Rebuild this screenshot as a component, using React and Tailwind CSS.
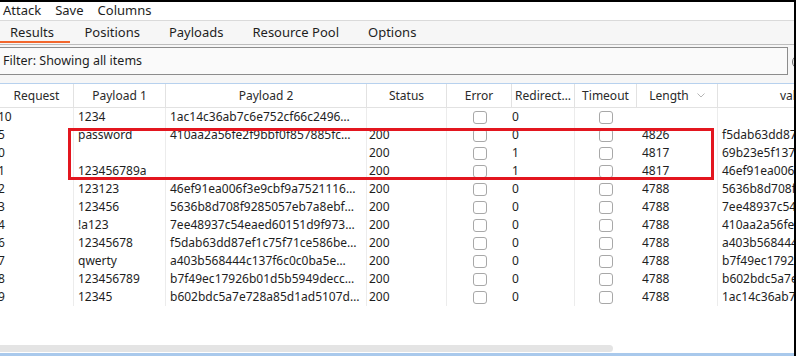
import React from "react";

const rows = [
  { req: "10", p1: "1234", p2: "1ac14c36ab7c6e752cf66c2496…", st: "", rd: "0", len: "", val: "" },
  { req: "5", p1: "password", p2: "410aa2a56fe2f9bbf0f857885fc…", st: "200", rd: "0", len: "4826", val: "f5dab63dd87ef1c75f71ce586be" },
  { req: "0", p1: "", p2: "", st: "200", rd: "1", len: "4817", val: "69b23e5f137a44a8c0d1b22e09" },
  { req: "1", p1: "123456789a", p2: "", st: "200", rd: "1", len: "4817", val: "46ef91ea006f3e9cbf9a7521116" },
  { req: "2", p1: "123123", p2: "46ef91ea006f3e9cbf9a7521116…", st: "200", rd: "0", len: "4788", val: "5636b8d708f9285057eb7a8ebf" },
  { req: "3", p1: "123456", p2: "5636b8d708f9285057eb7a8ebf…", st: "200", rd: "0", len: "4788", val: "7ee48937c54eaed60151d9f973" },
  { req: "4", p1: "!a123", p2: "7ee48937c54eaed60151d9f973…", st: "200", rd: "0", len: "4788", val: "410aa2a56fe2f9bbf0f857885fc" },
  { req: "6", p1: "12345678", p2: "f5dab63dd87ef1c75f71ce586be…", st: "200", rd: "0", len: "4788", val: "a403b568444c137f6c0c0ba5e" },
  { req: "7", p1: "qwerty", p2: "a403b568444c137f6c0c0ba5e…", st: "200", rd: "0", len: "4788", val: "b7f49ec17926b01d5b5949decc" },
  { req: "8", p1: "123456789", p2: "b7f49ec17926b01d5b5949decc…", st: "200", rd: "0", len: "4788", val: "b602bdc5a7e728a85d1ad5107d" },
  { req: "9", p1: "12345", p2: "b602bdc5a7e728a85d1ad5107d…", st: "200", rd: "0", len: "4788", val: "1ac14c36ab7c6e752cf66c2496" },
];

function Box() {
  return <div className="w-[14px] h-[13px] rounded-[3px] border border-[#a8a8a8] bg-white" />;
}

export default function App() {
  return (
    <div className="w-[796px] h-[356px] flex bg-white overflow-hidden font-['Noto_Sans',sans-serif] text-[#1e1e1e]">
      <div className="flex-1 min-w-0 flex flex-col border-t-2 border-black overflow-hidden">
        {/* menu */}
        <div className="h-[18px] flex items-center gap-[14px] pl-[3px] text-[13px] bg-white">
          <span>Attack</span>
          <span>Save</span>
          <span>Columns</span>
        </div>
        <div className="h-px bg-[#dadada]" />
        {/* tabs */}
        <div className="h-[23px] flex items-stretch bg-[#f6f6f6] text-[13px]">
          <div className="relative pl-[10px] pr-[16px] flex items-center">
            Results
            <div className="absolute left-0 right-0 bottom-[1px] h-[2px] bg-[#f2672e]" />
          </div>
          <div className="px-[14.5px] flex items-center">Positions</div>
          <div className="px-[14.5px] flex items-center">Payloads</div>
          <div className="px-[14.5px] flex items-center">Resource Pool</div>
          <div className="px-[14.5px] flex items-center">Options</div>
        </div>
        <div className="h-px bg-[#bdbdbd]" />
        {/* filter */}
        <div className="h-[38px] bg-[#f6f6f6] pt-[2px] flex items-start">
          <div className="ml-[-1px] w-[789px] shrink-0 h-[28px] border border-[#8c8c8c] bg-[#fafafa] flex items-center pl-[3px] text-[12.5px]">
            Filter: Showing all items
          </div>
          <div className="ml-[4px] mt-[8px] shrink-0 w-[14px] h-[14px] rounded-full border-[1.5px] border-[#6a6a6a]" />
        </div>
        <div className="h-px bg-[#b7d1ee]" />
        {/* table */}
        <div className="relative flex-1 flex flex-col text-[12px]">
          <div className="h-[24px] flex border-b border-[#e2e2e2] text-[#2a2a2a] shrink-0">
            <div className="w-[74px] shrink-0 flex items-center justify-center border-r border-[#e2e2e2]">Request</div>
            <div className="w-[92px] shrink-0 flex items-center justify-center border-r border-[#e2e2e2]">Payload 1</div>
            <div className="w-[201px] shrink-0 flex items-center justify-center border-r border-[#e2e2e2]">Payload 2</div>
            <div className="w-[80px] shrink-0 flex items-center justify-center border-r border-[#e2e2e2]">Status</div>
            <div className="w-[65px] shrink-0 flex items-center justify-center border-r border-[#e2e2e2]">Error</div>
            <div className="w-[63px] shrink-0 flex items-center justify-center border-r border-[#e2e2e2]">Redirect…</div>
            <div className="w-[62px] shrink-0 flex items-center justify-center border-r border-[#e2e2e2]">Timeout</div>
            <div className="w-[81px] shrink-0 flex items-center justify-center border-r border-[#e2e2e2]">
              Length
              <svg className="ml-[8px]" width="8" height="5" viewBox="0 0 8 5">
                <path d="M0.5 0.5 L4 4 L7.5 0.5" fill="none" stroke="#b5b5b5" strokeWidth="1" />
              </svg>
            </div>
            <div className="w-[154px] shrink-0 flex items-center justify-center">value</div>
          </div>
          {rows.map((r, i) => (
            <div key={i} className="h-[18px] flex shrink-0">
              <div className="w-[74px] shrink-0 overflow-hidden whitespace-nowrap flex items-center border-r border-[#ececec]">
                <span className="ml-[-2px]">{r.req}</span>
              </div>
              <div className="w-[92px] shrink-0 overflow-hidden whitespace-nowrap flex items-center pl-[4px] border-r border-[#ececec]">{r.p1}</div>
              <div className="w-[201px] shrink-0 overflow-hidden whitespace-nowrap flex items-center pl-[4px] border-r border-[#ececec]">{r.p2}</div>
              <div className="w-[80px] shrink-0 flex items-center pl-[2px] border-r border-[#ececec]">{r.st}</div>
              <div className="w-[65px] shrink-0 flex items-center justify-center"><Box /></div>
              <div className="w-[63px] shrink-0 flex items-center pl-[0px] border-r border-[#ececec]">{r.rd}</div>
              <div className="w-[62px] shrink-0 flex items-center justify-center"><Box /></div>
              <div className="w-[81px] shrink-0 flex items-center pl-[5px] border-r border-[#ececec]">{r.len}</div>
              <div className="w-[154px] shrink-0 overflow-hidden whitespace-nowrap flex items-center pl-[4px]">{r.val}</div>
            </div>
          ))}
          <div className="flex-1" />
          <div className="h-[7px] flex shrink-0">
            <div className="w-[613px] h-full bg-[#e4e4e4] rounded-r-[4px]" />
          </div>
          <div className="h-px bg-white shrink-0" />
          <div className="h-[3px] shrink-0 bg-[#a9c9ec]" />
          {/* highlight annotation */}
          <div className="absolute left-[68px] top-[44px] w-[646px] h-[52px] border-[3px] border-[#e3161f] pointer-events-none" />
        </div>
      </div>
      <div className="w-[2px] shrink-0 bg-black" />
    </div>
  );
}
